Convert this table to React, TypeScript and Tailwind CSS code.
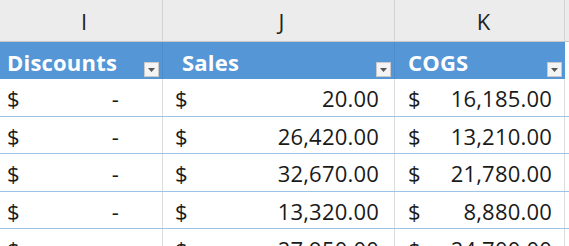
import React from "react";

const rows = [
  ["20.00", "16,185.00"],
  ["26,420.00", "13,210.00"],
  ["32,670.00", "21,780.00"],
  ["13,320.00", "8,880.00"],
  ["27,950.00", "24,700.00"],
];

function Drop() {
  return (
    <div className="absolute right-[3px] bottom-[2px] w-[15px] h-[15px] bg-[#f4f4f4] border border-[#c9c9c9] flex items-center justify-center">
      <svg width="7" height="4" viewBox="0 0 7 4"><path d="M0 0 L7 0 L3.5 4 Z" fill="#555" /></svg>
    </div>
  );
}

export default function App() {
  const font = { fontFamily: '"Open Sans", sans-serif' };
  return (
    <div className="w-[569px] h-[246px] overflow-hidden bg-white" style={font}>
      <div className="grid grid-cols-[163px_232px_170px_4px] h-[42px] bg-[#ececec] border-b border-[#c8c8c8] text-[#222] text-[22px]">
        <div className="flex items-center justify-center border-r border-[#d4d4d4] pl-[6px] pt-[2px]">I</div>
        <div className="flex items-center justify-center border-r border-[#d4d4d4] pl-[6px] pt-[2px]">J</div>
        <div className="flex items-center justify-center border-r border-[#d4d4d4] pl-[8px] pt-[2px]">K</div>
        <div />
      </div>
      <div className="grid grid-cols-[163px_232px_170px_4px] h-[37px] bg-[#5596d6] text-white font-bold text-[22px] tracking-[0.2px]">
        <div className="relative flex items-center pl-[7px] pt-[3px] border-r border-[#4d8ccb]">Discounts<Drop /></div>
        <div className="relative flex items-center pl-[19px] pt-[3px] border-r border-[#4d8ccb]">Sales<Drop /></div>
        <div className="relative flex items-center pl-[13px] pt-[3px]">COGS<Drop /></div>
        <div className="bg-white" />
      </div>
      {rows.map((r, i) => (
        <div key={i} className="grid grid-cols-[163px_232px_170px_4px] h-[37.6px] border-b border-[#9dc3e6] text-[#1a1a1a] text-[22px] tracking-[0.2px]">
          <div className="flex items-center justify-between pl-[7px] pr-[43px] pt-[3px] border-r border-[#dcdcdc]">
            <span>$</span><span>-</span>
          </div>
          <div className="flex items-center justify-between pl-[12px] pr-[15px] pt-[3px] border-r border-[#dcdcdc]">
            <span>$</span><span>{r[0]}</span>
          </div>
          <div className="flex items-center justify-between pl-[13px] pr-[12px] pt-[3px] border-r border-[#dcdcdc]">
            <span>$</span><span>{r[1]}</span>
          </div>
          <div />
        </div>
      ))}
    </div>
  );
}
